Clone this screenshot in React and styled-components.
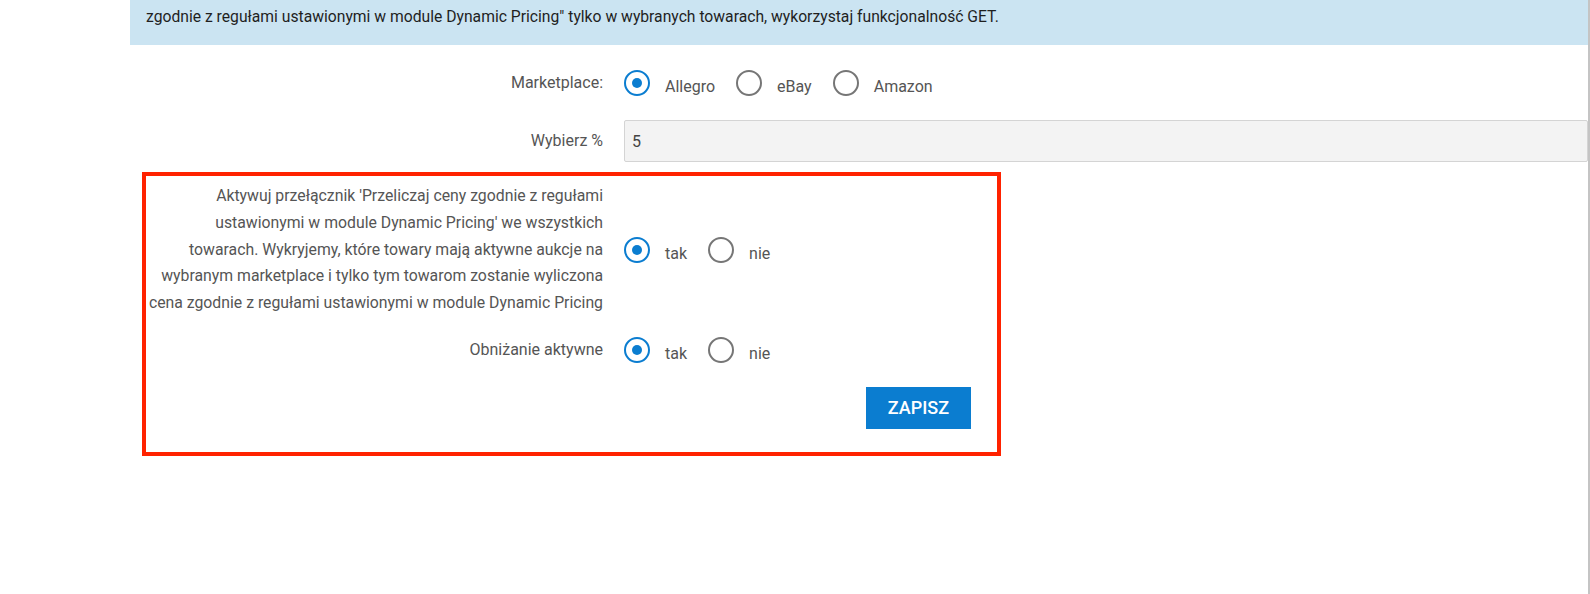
import React, { useState } from "react";
import styled, { createGlobalStyle } from "styled-components";

const GlobalStyle = createGlobalStyle`
  html, body {
    margin: 0;
    padding: 0;
    background: #ffffff;
  }
  body {
    font-family: Roboto, "Liberation Sans", Arial, sans-serif;
  }
`;

const Page = styled.div`
  display: flex;
  height: 594px;
  overflow: hidden;
`;

const Gutter = styled.div`
  width: 130px;
  flex-shrink: 0;
`;

const Main = styled.div`
  flex: 1;
  display: flex;
  flex-direction: column;
  border-right: 2px solid #c4c4c4;
`;

const InfoBanner = styled.div`
  background: #cbe4f2;
  color: #1f1f1f;
  font-size: 15.7px;
  line-height: 23px;
  padding: 5px 16px 17px 16px;
`;

const FormRow = styled.div`
  display: grid;
  grid-template-columns: ${(p) => p.$labelWidth}px 1fr;
  column-gap: 21px;
  align-items: center;
  min-height: 42px;
  margin-top: ${(p) => p.$top || 0}px;
`;

const Label = styled.div`
  text-align: right;
  color: #555555;
  font-size: ${(p) => p.$size || 16}px;
  line-height: 26.8px;
`;

const LongLine = styled.span`
  display: block;
  white-space: nowrap;
`;

const RadioGroup = styled.div`
  display: flex;
  align-items: center;
`;

const RadioOption = styled.label`
  display: inline-flex;
  align-items: center;
  gap: 15px;
  margin-right: 21px;
  cursor: pointer;
`;

const RadioCircle = styled.span`
  width: 26px;
  height: 26px;
  box-sizing: border-box;
  border-radius: 50%;
  border: 2.8px solid ${(p) => (p.$checked ? "#0b7dd0" : "#767676")};
  display: flex;
  align-items: center;
  justify-content: center;

  &::after {
    content: "";
    width: 10px;
    height: 10px;
    border-radius: 50%;
    background: #0b7dd0;
    display: ${(p) => (p.$checked ? "block" : "none")};
  }
`;

const RadioText = styled.span`
  color: #555555;
  font-size: 16px;
  padding-top: 7px;
`;

const TextInput = styled.input`
  height: 42px;
  box-sizing: border-box;
  width: 100%;
  background: #f3f3f3;
  border: 1px solid #d4d4d4;
  border-radius: 2px;
  padding: 0 7px;
  font-family: inherit;
  font-size: 16px;
  color: #444444;
  outline: none;
`;

const Highlight = styled.div`
  margin: 10px 0 0 12px;
  width: 859px;
  box-sizing: border-box;
  border: 4px solid #ff2200;
  padding: 7px 26px 23px 0;
`;

const Actions = styled.div`
  display: flex;
  justify-content: flex-end;
  margin-top: 16px;
`;

const SaveButton = styled.button`
  height: 42px;
  padding: 0 22px;
  background: #0b7dd0;
  color: #ffffff;
  border: none;
  border-radius: 0;
  font-family: inherit;
  font-size: 18px;
  font-weight: 500;
  cursor: pointer;
`;

const RadioSet = ({ options, value, onChange }) => (
  <RadioGroup>
    {options.map((opt) => (
      <RadioOption key={opt} onClick={() => onChange(opt)}>
        <RadioCircle $checked={value === opt} />
        <RadioText>{opt}</RadioText>
      </RadioOption>
    ))}
  </RadioGroup>
);

const App = () => {
  const [market, setMarket] = useState("Allegro");
  const [percent, setPercent] = useState("5");
  const [recalc, setRecalc] = useState("tak");
  const [lowering, setLowering] = useState("tak");

  return (
    <Page>
      <GlobalStyle />
      <Gutter />
      <Main>
        <InfoBanner>
          zgodnie z regułami ustawionymi w module Dynamic Pricing" tylko w
          wybranych towarach, wykorzystaj funkcjonalność GET.
        </InfoBanner>

        <FormRow $labelWidth={473} $top={17}>
          <Label>Marketplace:</Label>
          <RadioSet
            options={["Allegro", "eBay", "Amazon"]}
            value={market}
            onChange={setMarket}
          />
        </FormRow>

        <FormRow $labelWidth={473} $top={16}>
          <Label>Wybierz %</Label>
          <TextInput
            value={percent}
            onChange={(e) => setPercent(e.target.value)}
          />
        </FormRow>

        <Highlight>
          <FormRow $labelWidth={457}>
            <Label $size={15.8}>
              <LongLine>
                Aktywuj przełącznik 'Przeliczaj ceny zgodnie z regułami
              </LongLine>
              <LongLine>
                ustawionymi w module Dynamic Pricing' we wszystkich
              </LongLine>
              <LongLine>
                towarach. Wykryjemy, które towary mają aktywne aukcje na
              </LongLine>
              <LongLine>
                wybranym marketplace i tylko tym towarom zostanie wyliczona
              </LongLine>
              <LongLine>
                cena zgodnie z regułami ustawionymi w module Dynamic Pricing
              </LongLine>
            </Label>
            <RadioSet
              options={["tak", "nie"]}
              value={recalc}
              onChange={setRecalc}
            />
          </FormRow>

          <FormRow $labelWidth={457} $top={12}>
            <Label>Obniżanie aktywne</Label>
            <RadioSet
              options={["tak", "nie"]}
              value={lowering}
              onChange={setLowering}
            />
          </FormRow>

          <Actions>
            <SaveButton>ZAPISZ</SaveButton>
          </Actions>
        </Highlight>
      </Main>
    </Page>
  );
};

export default App;
